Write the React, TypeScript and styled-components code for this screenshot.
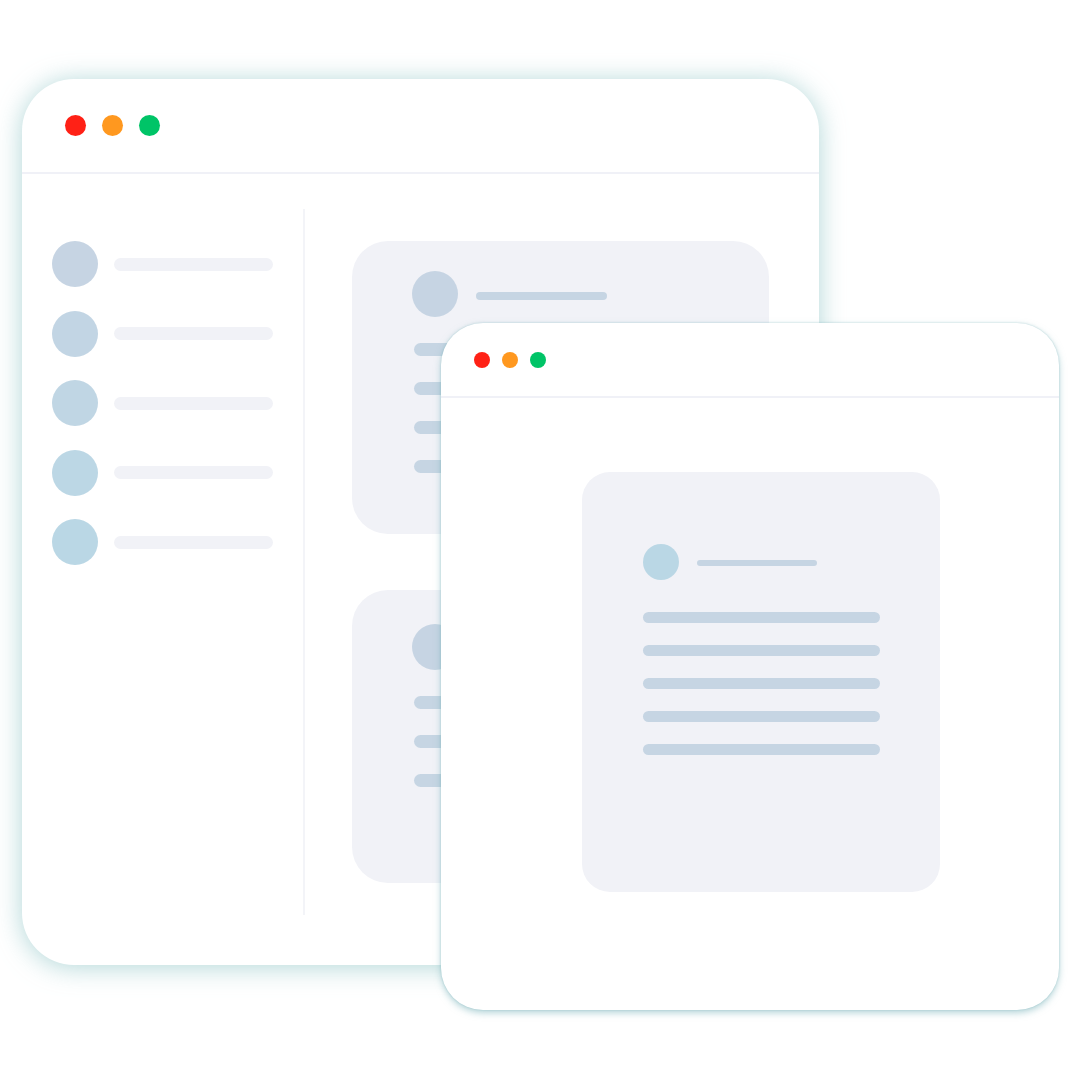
import styled, { createGlobalStyle } from 'styled-components'

const GlobalStyle = createGlobalStyle`
  html, body {
    margin: 0;
    padding: 0;
    background: #ffffff;
    font-family: 'Inter', 'Liberation Sans', sans-serif;
  }
`

const Canvas = styled.div`
  position: relative;
  width: 1080px;
  height: 1080px;
  overflow: hidden;
  background: #ffffff;
`

const Window = styled.div<{ $left: number; $top: number; $w: number; $h: number; $radius: number; $front?: boolean }>`
  position: absolute;
  left: ${(p) => p.$left}px;
  top: ${(p) => p.$top}px;
  width: ${(p) => p.$w}px;
  height: ${(p) => p.$h}px;
  border-radius: ${(p) => p.$radius}px;
  background: #ffffff;
  display: flex;
  flex-direction: column;
  overflow: hidden;
  z-index: ${(p) => (p.$front ? 2 : 1)};
  box-shadow: ${(p) =>
    p.$front
      ? '0 3px 7px rgba(120, 178, 185, 0.55), 0 0 2px rgba(120, 178, 185, 0.5)'
      : '0 2px 26px rgba(150, 200, 202, 0.75)'};
`

const TitleBar = styled.div<{ $h: number; $pad: number; $gap: number }>`
  flex: none;
  height: ${(p) => p.$h}px;
  padding-left: ${(p) => p.$pad}px;
  display: flex;
  align-items: center;
  gap: ${(p) => p.$gap}px;
  border-bottom: 2px solid #f0f1f7;
`

const Dot = styled.span<{ $color: string; $size: number }>`
  width: ${(p) => p.$size}px;
  height: ${(p) => p.$size}px;
  border-radius: 50%;
  background: ${(p) => p.$color};
`

const BackBody = styled.div`
  flex: 1;
  display: flex;
`

const Sidebar = styled.div`
  width: 281px;
  padding: 67px 0 0 30px;
  box-sizing: border-box;
  display: flex;
  flex-direction: column;
  gap: 23.5px;
`

const SideRow = styled.div`
  display: flex;
  align-items: center;
  gap: 16px;
`

const Avatar = styled.span<{ $size: number; $color: string }>`
  flex: none;
  width: ${(p) => p.$size}px;
  height: ${(p) => p.$size}px;
  border-radius: 50%;
  background: ${(p) => p.$color};
`

const Bar = styled.span<{ $w: number; $h: number; $color: string; $shift?: number }>`
  flex: none;
  display: block;
  width: ${(p) => p.$w}px;
  height: ${(p) => p.$h}px;
  border-radius: ${(p) => p.$h / 2}px;
  background: ${(p) => p.$color};
  margin-top: ${(p) => p.$shift ?? 0}px;
`

const VDivider = styled.div`
  width: 2px;
  margin: 35px 0 50px;
  background: #f3f4f8;
`

const Content = styled.div`
  flex: 1;
  padding: 67px 0 0 47px;
  display: flex;
  flex-direction: column;
  gap: 56px;
`

const Card = styled.div<{ $w: number; $h: number; $radius: number; $padTop: number; $padLeft: number }>`
  width: ${(p) => p.$w}px;
  height: ${(p) => p.$h}px;
  border-radius: ${(p) => p.$radius}px;
  background: #f1f2f7;
  padding: ${(p) => p.$padTop}px 0 0 ${(p) => p.$padLeft}px;
  box-sizing: border-box;
  display: flex;
  flex-direction: column;
`

const CardHead = styled.div<{ $gap: number; $indent?: number }>`
  display: flex;
  align-items: center;
  gap: ${(p) => p.$gap}px;
  margin-left: ${(p) => p.$indent ?? 0}px;
`

const Lines = styled.div<{ $top: number; $gap: number }>`
  margin-top: ${(p) => p.$top}px;
  display: flex;
  flex-direction: column;
  gap: ${(p) => p.$gap}px;
`

const FrontBody = styled.div`
  flex: 1;
  padding: 74px 0 0 141px;
`

const LINE = '#c6d5e3'
const sideAvatars = ['#c6d4e3', '#c2d5e4', '#c0d6e4', '#bcd7e5', '#bad7e5']

function TrafficLights({ size }: { size: number }) {
  return (
    <>
      <Dot $color="#ff2116" $size={size} />
      <Dot $color="#ff981f" $size={size} />
      <Dot $color="#00c467" $size={size} />
    </>
  )
}

function BackCard({ lines, padTop }: { lines: number; padTop: number }) {
  return (
    <Card $w={417} $h={293} $radius={36} $padTop={padTop} $padLeft={62}>
      <CardHead $gap={18} $indent={-2}>
        <Avatar $size={46} $color="#c6d4e3" />
        <Bar $w={131} $h={8} $color={LINE} $shift={4} />
      </CardHead>
      <Lines $top={26} $gap={26}>
        {Array.from({ length: lines }).map((_, i) => (
          <Bar key={i} $w={293} $h={13} $color={LINE} />
        ))}
      </Lines>
    </Card>
  )
}

export default function App() {
  return (
    <>
      <GlobalStyle />
      <Canvas>
        <Window $left={22} $top={79} $w={797} $h={886} $radius={52}>
          <TitleBar $h={93} $pad={43} $gap={16}>
            <TrafficLights size={21} />
          </TitleBar>
          <BackBody>
            <Sidebar>
              {sideAvatars.map((c, i) => (
                <SideRow key={i}>
                  <Avatar $size={46} $color={c} />
                  <Bar $w={159} $h={13} $color="#f1f2f7" />
                </SideRow>
              ))}
            </Sidebar>
            <VDivider />
            <Content>
              <BackCard lines={4} padTop={30} />
              <BackCard lines={3} padTop={34} />
            </Content>
          </BackBody>
        </Window>

        <Window $left={441} $top={323} $w={618} $h={687} $radius={42} $front>
          <TitleBar $h={73} $pad={33} $gap={12}>
            <TrafficLights size={16} />
          </TitleBar>
          <FrontBody>
            <Card $w={358} $h={420} $radius={28} $padTop={72} $padLeft={61}>
              <CardHead $gap={18}>
                <Avatar $size={36} $color="#bad7e5" />
                <Bar $w={120} $h={6} $color={LINE} $shift={2} />
              </CardHead>
              <Lines $top={32} $gap={22}>
                {Array.from({ length: 5 }).map((_, i) => (
                  <Bar key={i} $w={237} $h={11} $color={LINE} />
                ))}
              </Lines>
            </Card>
          </FrontBody>
        </Window>
      </Canvas>
    </>
  )
}
